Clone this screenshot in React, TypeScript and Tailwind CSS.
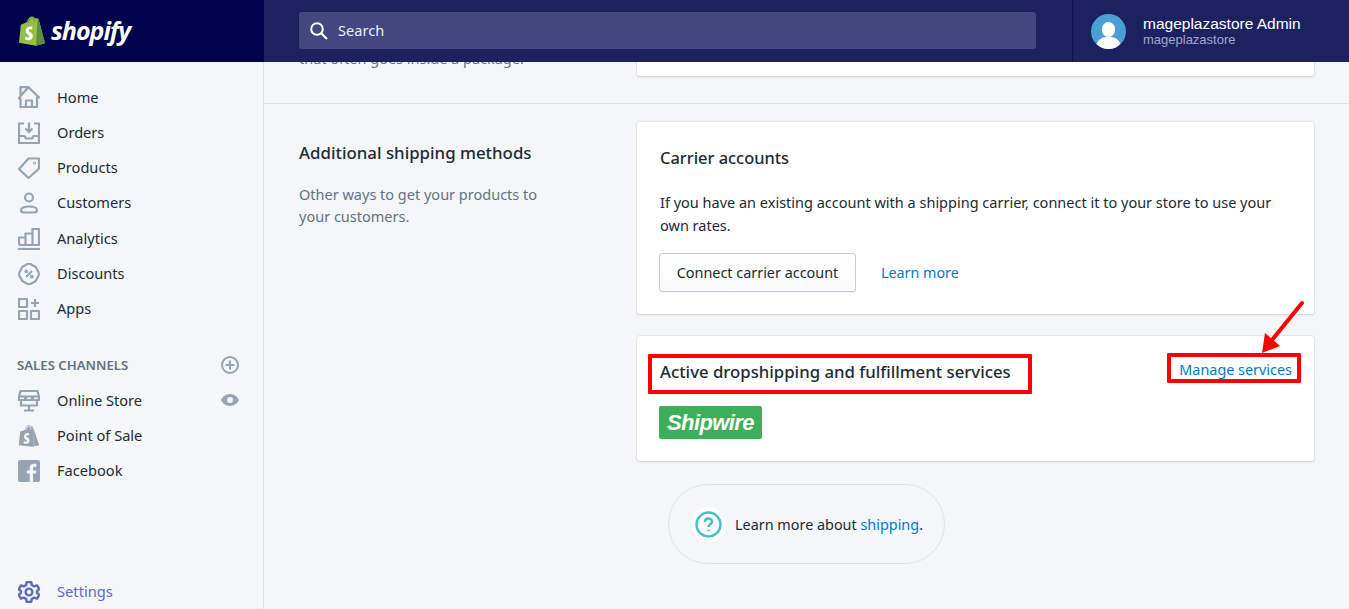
import type { ReactNode } from "react"

const iconClass = "h-[22px] w-[22px] shrink-0 text-[#95a3b3]"

function Stroke({ children }: { children: ReactNode }) {
  return (
    <svg viewBox="0 0 22 22" className={iconClass} fill="none" stroke="currentColor" strokeWidth="2.2" strokeLinejoin="round">
      {children}
    </svg>
  )
}

function HomeIcon() {
  return (
    <Stroke>
      <path d="M2.5 10V1.2H10.5L21 11.5H19V21H2.5V12.5H1L2.5 10" />
      <path d="M10.5 1.2L2.5 10" />
      <path d="M8 21V14.5H14V21" />
    </Stroke>
  )
}

function OrdersIcon() {
  return (
    <Stroke>
      <path d="M6 1.5H1V21H21V1.5H16" />
      <path d="M1 14H6.5L8 16.5H14L15.5 14H21" />
      <path d="M11 0.5V9.5M7.5 6.5L11 10L14.5 6.5" />
    </Stroke>
  )
}

function ProductsIcon() {
  return (
    <Stroke>
      <path d="M1 12L10.5 1.5H21V11.5L10.5 21Z" />
      <circle cx="16.5" cy="6" r="0.4" />
    </Stroke>
  )
}

function CustomersIcon() {
  return (
    <Stroke>
      <circle cx="11" cy="5.5" r="4" />
      <path d="M6 20.5C3.5 20.5 3 18.8 3 18C3 15.8 6.5 14.5 11 14.5C15.5 14.5 19 15.8 19 18C19 18.8 18.5 20.5 16 20.5Z" />
    </Stroke>
  )
}

function AnalyticsIcon() {
  return (
    <Stroke>
      <path d="M1 17V9.5H7.5V17M7.5 17V5.5H14.5V17M14.5 17V1H21V17H1" />
      <path d="M0 21H22" />
    </Stroke>
  )
}

function DiscountsIcon() {
  return (
    <Stroke>
      <path d="M8 1.8C9.5 0.6 12.5 0.6 14 1.8C15.5 3 16.5 3 17.5 3.8C18.5 4.7 18.5 6 19.6 7.5C21.3 9.5 21.3 12.5 19.6 14.5C18.5 16 18.5 17.3 17.5 18.2C16.5 19 15.5 19 14 20.2C12.5 21.4 9.5 21.4 8 20.2C6.5 19 5.5 19 4.5 18.2C3.5 17.3 3.5 16 2.4 14.5C0.7 12.5 0.7 9.5 2.4 7.5C3.5 6 3.5 4.7 4.5 3.8C5.5 3 6.5 3 8 1.8Z" />
      <path d="M14 8L8 14" />
      <circle cx="8.3" cy="8.3" r="0.8" />
      <circle cx="13.7" cy="13.7" r="0.8" />
    </Stroke>
  )
}

function AppsIcon() {
  return (
    <Stroke>
      <rect x="1" y="1" width="8" height="8" />
      <rect x="1" y="13" width="8" height="8" />
      <rect x="13" y="13" width="8" height="8" />
      <path d="M17 1V9M13 5H21" />
    </Stroke>
  )
}

function StoreIcon() {
  return (
    <Stroke>
      <path d="M2.5 1H19.5L21 6.5V10H1V6.5Z" />
      <path d="M1 6.5H21" />
      <path d="M7.5 6.5V10M14.5 6.5V10" strokeWidth="3" />
      <path d="M3 10V15.5H19V10" />
      <path d="M11 15.5V20M6 20.5H16" />
    </Stroke>
  )
}

function BagIcon({ className }: { className: string }) {
  return (
    <svg viewBox="0 0 22 22" className={className}>
      <path fill="currentColor" d="M2.2 6.6C5 5.6 6.4 5 7.2 4.4C7.8 2 9.2 0.4 10.8 0.3C12 0.2 12.8 0.8 13.2 1.8L14.6 1.5L16 5L21.2 20.2L14.2 21.8L0.8 20.2Z" />
      <path fill="#f4f6f8" d="M11.4 8.5L10.8 10.5C9.6 10 8.3 10.4 8.3 11.3C8.3 12.5 11.6 12.8 11.6 15.6C11.6 17.9 9.9 19 7.8 18.9C6.7 18.8 5.8 18.3 5.4 17.9L6 16C6.5 16.4 7.3 16.8 8 16.8C8.6 16.8 8.9 16.4 8.9 16C8.9 14.6 6 14.4 6 11.7C6 9.6 7.7 8.1 9.9 8.1C10.5 8.1 11.1 8.3 11.4 8.5Z" />
      <path fill="#f4f6f8" d="M15.2 5.2L14.4 2.6L15 2.4L16.6 21.4L15.8 21.6Z" opacity="0.5" />
      <path fill="none" stroke="#f4f6f8" strokeWidth="0.8" d="M8 5C8.4 2.6 9.6 1.2 11 1.2C12.3 1.2 12.8 2.6 12.8 4.4" />
    </svg>
  )
}

function FacebookIcon() {
  return (
    <svg viewBox="0 0 22 22" className={iconClass}>
      <rect width="22" height="22" rx="2" fill="currentColor" />
      <path fill="#f4f6f8" d="M15 22V13.6H17.9L18.3 10.4H15V8.4C15 7.4 15.3 6.8 16.7 6.8H18.4V3.9C18.1 3.9 17.1 3.8 15.9 3.8C13.4 3.8 11.7 5.3 11.7 8.1V10.4H8.8V13.6H11.7V22Z" />
    </svg>
  )
}

function SettingsIcon() {
  return (
    <svg viewBox="0 0 22 22" className="h-[22px] w-[22px] shrink-0 text-[#5c6ac4]" fill="none" stroke="currentColor" strokeWidth="2.4" strokeLinejoin="round">
      <path d="M8.8 1H13.2L13.8 4L16.2 5.4L19.1 4.4L21.3 8.2L19 10.2V11.8L21.3 13.8L19.1 17.6L16.2 16.6L13.8 18L13.2 21H8.8L8.2 18L5.8 16.6L2.9 17.6L0.7 13.8L3 11.8V10.2L0.7 8.2L2.9 4.4L5.8 5.4L8.2 4Z" />
      <circle cx="11" cy="11" r="3.4" />
    </svg>
  )
}

function NavItem({ icon, label }: { icon: ReactNode; label: string }) {
  return (
    <div className="flex h-[35.3px] items-center pl-[18px]">
      {icon}
      <span className="ml-[17px] text-[14.6px] text-[#212b36]">{label}</span>
    </div>
  )
}

const mainNav = [
  { label: "Home", icon: <HomeIcon /> },
  { label: "Orders", icon: <OrdersIcon /> },
  { label: "Products", icon: <ProductsIcon /> },
  { label: "Customers", icon: <CustomersIcon /> },
  { label: "Analytics", icon: <AnalyticsIcon /> },
  { label: "Discounts", icon: <DiscountsIcon /> },
  { label: "Apps", icon: <AppsIcon /> },
]

function Sidebar() {
  return (
    <aside className="flex w-[264px] shrink-0 flex-col border-r border-[#dfe3e8] pt-[17.8px]">
      {mainNav.map((item) => (
        <NavItem key={item.label} icon={item.icon} label={item.label} />
      ))}
      <div className="mt-[21px] flex h-[35px] items-center justify-between pl-[17px] pr-[24px]">
        <span className="pt-[1px] text-[13.2px] font-semibold text-[#637381]">SALES CHANNELS</span>
        <svg viewBox="0 0 18 18" className="h-[18px] w-[18px] text-[#95a3b3]" fill="none" stroke="currentColor" strokeWidth="2">
          <circle cx="9" cy="9" r="8" />
          <path d="M9 4.5V13.5M4.5 9H13.5" />
        </svg>
      </div>
      <div className="relative">
        <NavItem icon={<StoreIcon />} label="Online Store" />
        <svg viewBox="0 0 18 12" className="absolute left-[221px] top-[11px] h-[12px] w-[18px] text-[#95a3b3]">
          <path fill="currentColor" fillRule="evenodd" d="M9 0C4.5 0 1.2 3.2 0 6C1.2 8.8 4.5 12 9 12C13.5 12 16.8 8.8 18 6C16.8 3.2 13.5 0 9 0ZM9 3A3 3 0 1 1 9 9A3 3 0 0 1 9 3Z" />
        </svg>
      </div>
      <NavItem icon={<BagIcon className={iconClass} />} label="Point of Sale" />
      <NavItem icon={<FacebookIcon />} label="Facebook" />
      <div className="mt-auto">
        <div className="flex h-[36px] items-center pl-[18px] pt-[1px]">
          <SettingsIcon />
          <span className="ml-[17px] text-[14.7px] text-[#5c6ac4]">Settings</span>
        </div>
      </div>
    </aside>
  )
}

function Header() {
  return (
    <header className="flex h-[62px] shrink-0 bg-[#1c2260]">
      <div className="flex w-[264px] shrink-0 items-center bg-[#00044c] pl-[18px]">
        <svg viewBox="0 0 22 24" className="h-[33px] w-[28px]">
          <path fill="#95bf47" d="M2.2 6.6C5 5.6 6.4 5 7.2 4.4C7.8 2 9.2 0.4 10.8 0.3C12 0.2 12.8 0.8 13.2 1.8L15.4 1.5L16.4 3L21.2 21.2L14.2 23.2L0.8 20.8Z" />
          <path fill="#5e8e3e" d="M15.4 1.5L16.4 3L21.2 21.2L14.2 23.2Z" />
          <path fill="#ffffff" d="M11.4 8.5L10.8 10.5C9.6 10 8.3 10.4 8.3 11.3C8.3 12.5 11.6 12.8 11.6 15.6C11.6 17.9 9.9 19 7.8 18.9C6.7 18.8 5.8 18.3 5.4 17.9L6 16C6.5 16.4 7.3 16.8 8 16.8C8.6 16.8 8.9 16.4 8.9 16C8.9 14.6 6 14.4 6 11.7C6 9.6 7.7 8.1 9.9 8.1C10.5 8.1 11.1 8.3 11.4 8.5Z" />
          <path fill="none" stroke="#5e8e3e" strokeWidth="0.7" d="M8 5C8.4 2.6 9.6 1.2 11 1.2C12.3 1.2 12.8 2.6 12.8 4.4" />
        </svg>
        <span className="ml-[5px] font-['Open_Sans',sans-serif] text-[25px] font-bold italic tracking-[-1px] text-white">shopify</span>
      </div>
      <div className="flex flex-1 items-center pb-[1px] pl-[35px] pr-[36px]">
        <div className="flex h-[37px] w-full items-center rounded-[3px] bg-[#43467f] pl-[11px]">
          <svg viewBox="0 0 18 18" className="h-[18px] w-[18px]" fill="none" stroke="#ffffff" strokeWidth="2">
            <circle cx="7" cy="7" r="5.8" />
            <path d="M11.2 11.2L17 17" />
          </svg>
          <span className="ml-[10px] pt-[1px] text-[14.6px] text-[#eceef7]">Search</span>
        </div>
      </div>
      <div className="flex w-[277px] shrink-0 items-center border-l border-[#10134a] pl-[18px]">
        <div className="relative h-[35px] w-[35px] overflow-hidden rounded-full bg-[#4a9fd4]">
          <div className="absolute left-[11px] top-[8px] h-[15px] w-[13px] rounded-full bg-white" />
          <div className="absolute left-[5px] top-[23px] h-[16px] w-[25px] rounded-t-[10px] bg-white" />
        </div>
        <div className="ml-[17px] font-['Liberation_Sans',sans-serif]">
          <div className="text-[15.5px] leading-[17px] text-white">mageplazastore Admin</div>
          <div className="text-[13px] leading-[15px] text-[#a3a7c9]">mageplazastore</div>
        </div>
      </div>
    </header>
  )
}

function Card({ children, className }: { children: ReactNode; className: string }) {
  return (
    <div className={"relative w-[677px] rounded-[3px] bg-white shadow-[0_0_0_1px_rgba(63,63,68,0.05),0_1px_3px_0_rgba(63,63,68,0.15)] " + className}>
      {children}
    </div>
  )
}

function Content() {
  return (
    <main className="min-w-0 flex-1 overflow-hidden">
      <div className="flex h-[42px] border-b border-[#dfe3e8] pl-[35px]">
        <p className="-mt-[15px] h-[22px] w-[338px] text-[14.5px] leading-[22px] text-[#637381]">
          that often goes inside a package.
        </p>
        <Card className="-mt-[10px] h-[24px]">
          <span />
        </Card>
      </div>

      <div className="flex pl-[35px] pt-[18px]">
        <div className="w-[338px] pt-[18px]">
          <h2 className="text-[16.85px] font-medium leading-[26px] text-[#212b36]">Additional shipping methods</h2>
          <p className="mt-[17px] w-[260px] text-[14.5px] leading-[22px] text-[#637381]">
            Other ways to get your products to your customers.
          </p>
        </div>
        <div>
          <Card className="h-[192px] px-[23px] pt-[23px]">
            <h3 className="text-[16.4px] font-medium leading-[26px] text-[#212b36]">Carrier accounts</h3>
            <p className="mt-[20px] text-[14.5px] leading-[22.5px] text-[#212b36]">
              If you have an existing account with a shipping carrier, connect it to your store to use your own rates.
            </p>
            <div className="-ml-px mt-[17px] flex items-center">
              <button className="h-[39px] w-[197px] rounded-[3px] border border-[#c4cdd5] bg-gradient-to-b from-white to-[#f9fafb] text-[14.4px] text-[#212b36] shadow-[0_1px_0_0_rgba(22,29,37,0.05)]">
                Connect carrier account
              </button>
              <a className="ml-[25px] text-[14.3px] text-[#007ace]">Learn more</a>
            </div>
          </Card>
          <Card className="mt-[22px] h-[125px] pl-[23px] pr-[22px] pt-[22px]">
            <div className="flex items-start justify-between">
              <h3 className="text-[16.75px] font-medium leading-[28px] text-[#212b36]">Active dropshipping and fulfillment services</h3>
              <a className="mt-[1px] text-[14.4px] leading-[22px] text-[#007ace]">Manage services</a>
            </div>
            <div className="-ml-px mt-[20px] flex h-[33px] w-[103px] items-center justify-center rounded-[2px] bg-[#3fae5a]">
              <span className="font-['Liberation_Sans',sans-serif] text-[22px] font-bold italic tracking-[-0.6px] text-white">Shipwire</span>
            </div>
            <div className="absolute left-[11px] top-[18px] h-[40px] w-[384px] rounded-[1px] border-[4px] border-[#ff0000]" />
            <div className="absolute left-[530px] top-[17px] h-[30px] w-[134px] rounded-[1px] border-[4px] border-[#ff0000]" />
            <svg viewBox="0 0 50 60" className="absolute left-[620px] top-[-38px] h-[60px] w-[50px]">
              <path d="M45 5L15 42" stroke="#ff0000" strokeWidth="4" strokeLinecap="round" />
              <path d="M5 55L8 35L23 48Z" fill="#ff0000" />
            </svg>
          </Card>
          <div className="ml-[31px] mt-[23px] flex h-[80px] w-[277px] items-center rounded-full border border-[#dfe3e8] pl-[22px]">
            <div className="flex h-[35px] w-[35px] items-center justify-center rounded-full bg-white">
              <svg viewBox="0 0 26 26" className="h-[27px] w-[27px]" fill="none" stroke="#47c1bf" strokeWidth="2.4">
                <circle cx="13" cy="13" r="11.5" />
                <path d="M9.5 10.5C9.5 8.5 11 7.2 13 7.2C15 7.2 16.5 8.5 16.5 10.2C16.5 12.8 13 12.8 13 15.5" />
                <path d="M13 18V19.6" />
              </svg>
            </div>
            <span className="ml-[9px] pt-[1px] text-[14.4px] text-[#212b36]">
              Learn more about <a className="text-[#007ace]">shipping</a>.
            </span>
          </div>
        </div>
      </div>
    </main>
  )
}

export default function App() {
  return (
    <div className="flex h-screen flex-col overflow-hidden bg-[#f4f6f8] font-['Noto_Sans',sans-serif]">
      <Header />
      <div className="flex min-h-0 flex-1">
        <Sidebar />
        <Content />
      </div>
    </div>
  )
}
